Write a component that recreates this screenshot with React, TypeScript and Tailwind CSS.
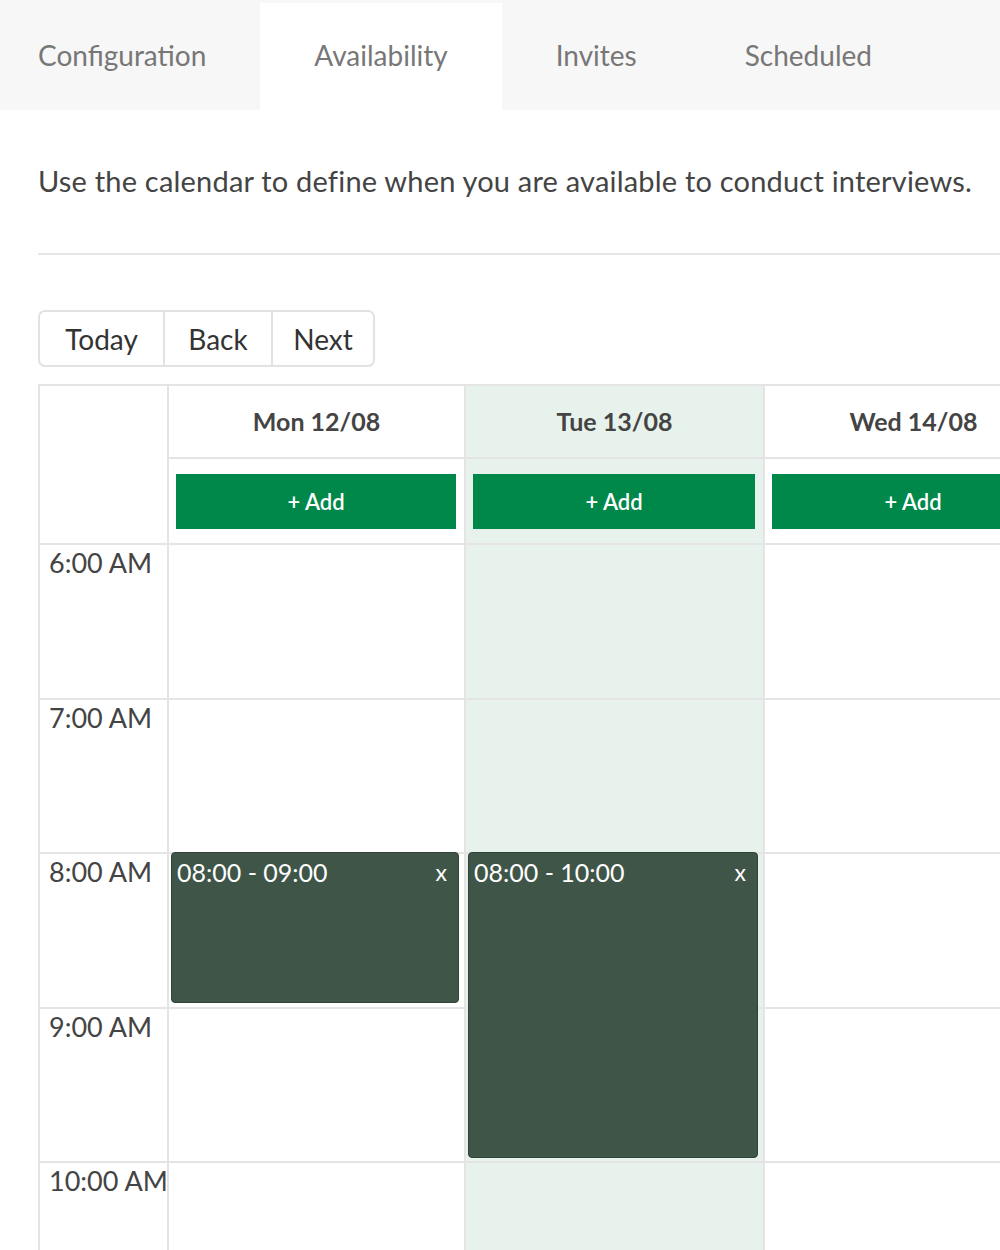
import React from "react";

const tabs = [
  { label: "Configuration", active: false, first: true },
  { label: "Availability", active: true },
  { label: "Invites", active: false },
  { label: "Scheduled", active: false },
];

const hours = ["6:00 AM", "7:00 AM", "8:00 AM", "9:00 AM", "10:00 AM"];

interface Slot {
  label: string;
  top: number;
  height: number;
}

interface Day {
  label: string;
  today: boolean;
  width: string;
  slots: Slot[];
}

const days: Day[] = [
  { label: "Mon 12/08", today: false, width: "w-[297px]", slots: [{ label: "08:00 - 09:00", top: 309, height: 151 }] },
  { label: "Tue 13/08", today: true, width: "w-[299px]", slots: [{ label: "08:00 - 10:00", top: 309, height: 306 }] },
  { label: "Wed 14/08", today: false, width: "w-[299px]", slots: [] },
];

function DayColumn({ day }: { day: Day }) {
  return (
    <div className={`${day.width} shrink-0 border-l-2 border-[#e4e4e4] ${day.today ? "bg-[#e8f2ec]" : "bg-white"}`}>
      <div className="flex h-[71px] items-center justify-center text-[25px] font-bold text-[#444]">{day.label}</div>
      <div className="flex h-[86px] items-center border-t-2 border-[#e4e4e4] pl-[7px] pr-[8px]">
        <button className="flex h-[55px] w-full items-center justify-center bg-[#00874a] text-[22px] font-semibold text-white">
          + Add
        </button>
      </div>
      <div className="relative">
        {hours.map((h) => (
          <div key={h} className="h-[154.5px] border-t-2 border-[#e4e4e4]" />
        ))}
        {day.slots.map((s) => (
          <div
            key={s.label}
            className="absolute left-[2px] right-[5px] flex items-start justify-between rounded-[4px] border border-[#2f4338] bg-[#3f5548] px-[5px] pt-[3px] text-[25px] leading-[32px] text-white"
            style={{ top: s.top, height: s.height }}
          >
            <span>{s.label}</span>
            <span className="pr-[6px] text-[23px]">x</span>
          </div>
        ))}
      </div>
    </div>
  );
}

export default function App() {
  return (
    <div className="h-[1250px] w-[1000px] overflow-hidden bg-white font-['Lato',sans-serif]">
      <div className="flex h-[110px] items-stretch bg-[#f7f7f7] pt-[3px]">
        {tabs.map((tab) => (
          <div
            key={tab.label}
            className={`flex items-center pb-[3px] text-[28px] text-[#777] ${tab.first ? "pl-[38px] pr-[54px]" : "px-[54px]"} ${
              tab.active ? "bg-white" : ""
            }`}
          >
            {tab.label}
          </div>
        ))}
      </div>

      <div className="px-[38px]">
        <p className="whitespace-nowrap pt-[52px] text-[29px] leading-[38px] tracking-[0.2px] text-[#444]">
          Use the calendar to define when you are available to conduct interviews.
        </p>
        <div className="mt-[53px] h-[2px] w-[1000px] bg-[#e6e6e6]" />

        <div className="mt-[55px] flex h-[57px] w-fit rounded-[7px] border-2 border-[#e2e2e2] text-[28px] text-[#333]">
          <button className="w-[123px] text-center">Today</button>
          <button className="w-[108px] border-l-2 border-[#e2e2e2] text-center">Back</button>
          <button className="w-[102px] border-l-2 border-[#e2e2e2] text-center">Next</button>
        </div>

        <div className="mt-[17px] flex w-[1100px] border-t-2 border-[#e4e4e4]">
          <div className="w-[129px] shrink-0 border-l-2 border-[#e4e4e4]">
            <div className="h-[157px]" />
            {hours.map((h) => (
              <div
                key={h}
                className="h-[154.5px] whitespace-nowrap border-t-2 border-[#e4e4e4] pl-[9px] pt-[1px] text-[27px] leading-[34px] text-[#444]"
              >
                {h}
              </div>
            ))}
          </div>
          {days.map((d) => (
            <DayColumn key={d.label} day={d} />
          ))}
        </div>
      </div>
    </div>
  );
}
